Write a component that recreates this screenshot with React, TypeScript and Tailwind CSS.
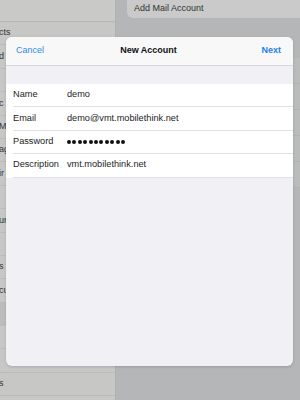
import React from "react";

const SIDE_ROWS: { text: string; shade?: boolean }[] = [
  { text: "cts" },
  { text: "d" },
  { text: "" },
  { text: "c" },
  { text: "M" },
  { text: "ag" },
  { text: "ir" },
  { text: "" },
  { text: "ur" },
  { text: "" },
  { text: "s" },
  { text: "cu" },
  { text: "", shade: true },
  { text: "" },
  { text: "" },
  { text: "s" },
];

const FIELDS = [
  { label: "Name", value: "demo" },
  { label: "Email", value: "demo@vmt.mobilethink.net" },
  { label: "Password", value: "" },
  { label: "Description", value: "vmt.mobilethink.net" },
];

const PasswordDots: React.FC<{ count: number }> = ({ count }) => (
  <div className="flex items-center gap-[1.4px]">
    {Array.from({ length: count }).map((_, i) => (
      <span key={i} className="w-[4px] h-[4px] rounded-full bg-[#111]" />
    ))}
  </div>
);

const App: React.FC = () => {
  return (
    <div
      className="relative w-[300px] h-[400px] overflow-hidden flex bg-[#b5b6b7]"
      style={{ fontFamily: '"Liberation Sans", Arial, sans-serif' }}
    >
      {/* dimmed sidebar */}
      <div className="w-[116px] h-full bg-[#c7c8c6] border-r border-[#b0b1af] flex flex-col">
        <div className="h-[22px] shrink-0 border-b border-[#b6b7b5] bg-[#c9cac8]" />
        {SIDE_ROWS.map((row, i) => (
          <div
            key={i}
            className={`h-[23.4px] shrink-0 flex items-center border-b border-[#bbbcba] text-[9px] text-[#333] ${
              row.shade ? "bg-[#bcbdbb]" : ""
            }`}
          >
            <span className="-ml-[1px]">{row.text}</span>
          </div>
        ))}
      </div>

      {/* dimmed detail pane */}
      <div className="flex-1 h-full flex flex-col">
        <div className="ml-[11px] h-[18px] bg-[#c9cac9] rounded-bl-[6px] flex items-center pl-[7px] text-[9px] text-[#333]">
          Add Mail Account
        </div>
        <div className="mt-[40px] flex flex-col bg-[#babbbb]">
          {[0, 1, 2, 3, 4].map((i) => (
            <div key={i} className="h-[26px] border-b border-[#b1b2b2]" />
          ))}
        </div>
      </div>

      {/* modal sheet */}
      <div className="absolute left-[6px] top-[37px] w-[287px] h-[329px] rounded-[6px] overflow-hidden bg-[#f1f1f5] shadow-[0_1px_3px_rgba(0,0,0,0.15)] flex flex-col">
        <div className="h-[29px] shrink-0 bg-[#f8f8f8] border-b border-[#d8d8dc] grid grid-cols-[1fr_auto_1fr] items-center pl-[10px] pr-[12px] text-[9px]">
          <span className="text-[#2d89ea]">Cancel</span>
          <span className="font-bold text-[#111]">New Account</span>
          <span className="text-[#1f80e6] font-semibold text-right">Next</span>
        </div>
        <div className="h-[18px] shrink-0" />
        <div className="bg-white flex flex-col">
          {FIELDS.map((f) => (
            <div key={f.label} className="pl-[7px]">
              <div className="h-[23.4px] flex items-center border-b border-[#e0e0e4] text-[9.2px] text-[#1c1c1c]">
                <span className="w-[54px] shrink-0">{f.label}</span>
                {f.label === "Password" ? (
                  <PasswordDots count={11} />
                ) : (
                  <span>{f.value}</span>
                )}
              </div>
            </div>
          ))}
        </div>
      </div>
    </div>
  );
};

export default App;
